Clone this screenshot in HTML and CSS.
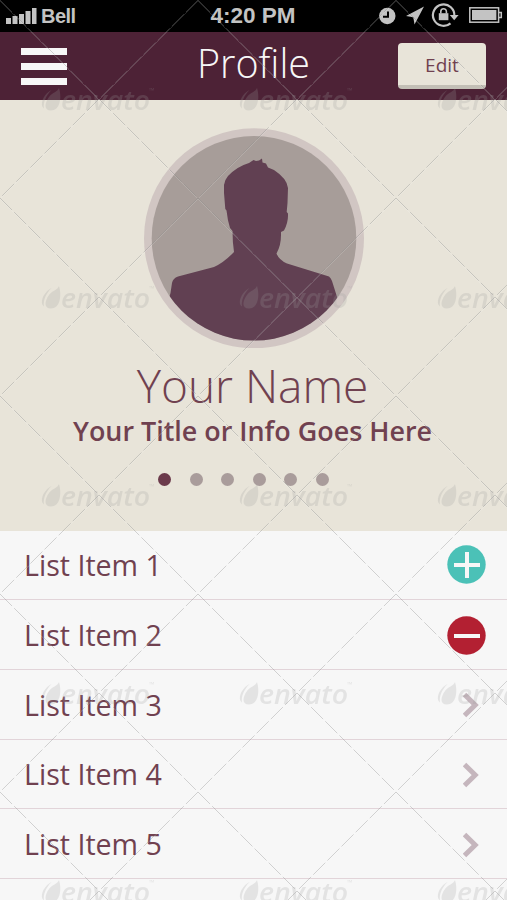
FILE: index.html
```html
<!DOCTYPE html>
<html lang="en">
<head>
<meta charset="utf-8">
<title>Profile</title>
<link rel="stylesheet" href="styles.css">
</head>
<body>
<div class="screen">
  <div class="status">
    <div class="carrier">
      <svg width="31" height="17" viewBox="0 0 31 17" fill="#c3c3c3"><path d="M0 11h5v6H0zM6.500 9h5v8h-5zM13 7h5v10h-5zM19.500 4h5v13h-5zM26 1h4.500v16H26z"/></svg>
      <span>Bell</span>
    </div>
    <div class="clock">4:20 PM</div>
    <svg class="indicators" width="125" height="28" viewBox="378 2 125 28" fill="#c3c3c3">
      <circle cx="387.300" cy="16" r="8.200"/>
      <path d="M388 11.500v5.300h-5" fill="none" stroke="#000" stroke-width="2"/>
      <path d="M424 6.500 414.500 24.500 413.300 17.200 406 16z"/>
      <path d="M450.500 23.300A10.700 10.700 0 1 1 454.300 16" fill="none" stroke="#c3c3c3" stroke-width="2.200"/>
      <path d="M449.800 15h8.800l-4.400 5.200z"/>
      <rect x="438.800" y="13.200" width="9.600" height="7"/>
      <path d="M440.800 13.500v-2a2.800 2.800 0 0 1 5.600 0v2" fill="none" stroke="#c3c3c3" stroke-width="1.600"/>
      <rect x="469.800" y="7.800" width="28.800" height="14.400" fill="none" stroke="#c3c3c3" stroke-width="1.500"/>
      <rect x="472" y="10" width="24.400" height="10"/>
      <path d="M499 12.500h2.300v5H499" fill="none" stroke="#c3c3c3" stroke-width="1.500"/>
    </svg>
  </div>
  <header class="bar">
    <div class="menu"><i></i><i></i><i></i></div>
    <h1 class="title">Profile</h1>
    <button class="edit">Edit</button>
  </header>
  <section class="hero">
    <svg class="avatar" width="220" height="220" viewBox="143 128 220 220">
      <defs><clipPath id="disc"><circle cx="253" cy="238.300" r="102.300"/></clipPath></defs>
      <circle cx="253" cy="238.300" r="110" fill="#d1c6c3"/>
      <circle cx="253" cy="238.300" r="102.300" fill="#a79d99"/>
      <path clip-path="url(#disc)" fill="#614052" d="M165 310 169.500 293 171 283Q172 278 177 276.500L213 267Q223 262.500 233 252 231.500 242 231.500 231L229 228Q226.500 220 225.500 210.500L224.300 209 223 193V185Q223.500 180 227 176 236 166.500 248 163L252.500 160 255 161 258 160.500 261 158.500 261.500 162.500 265 163.500 267 167.500 273 170Q286 178.500 287 188L286.500 203 285.700 212 287 213.500Q287.500 222 283 230.500L280 232Q280.500 245 275.500 253.500 278 260 286 263.500L328 276.500Q330 278 331 281L337 300 340 350H165z"/>
    </svg>
    <h2 class="name">Your Name</h2>
    <p class="info">Your Title or Info Goes Here</p>
    <div class="dots"><i class="on"></i><i></i><i></i><i></i><i></i><i></i></div>
  </section>
  <ul class="list">
    <li><span>List Item 1</span><svg class="badge add" width="39" height="39" viewBox="0 0 39 39"><circle cx="19.500" cy="19.500" r="19.200" fill="#4bc1b7"/><path d="M7 20h26M20 7v26" stroke="#f7f7f7" stroke-width="4"/></svg></li>
    <li><span>List Item 2</span><svg class="badge" width="39" height="39" viewBox="0 0 39 39"><circle cx="19.500" cy="19.500" r="19.200" fill="#b32032"/><path d="M7 20h26" stroke="#f7f7f7" stroke-width="4"/></svg></li>
    <li><span>List Item 3</span><svg class="chevron" width="16" height="26" viewBox="0 0 16 26"><path d="M1.500 2.500 12.200 13 1.500 23.500" fill="none" stroke="#c5b6bd" stroke-width="5"/></svg></li>
    <li><span>List Item 4</span><svg class="chevron" width="16" height="26" viewBox="0 0 16 26"><path d="M1.500 2.500 12.200 13 1.500 23.500" fill="none" stroke="#c5b6bd" stroke-width="5"/></svg></li>
    <li><span>List Item 5</span><svg class="chevron" width="16" height="26" viewBox="0 0 16 26"><path d="M1.500 2.500 12.200 13 1.500 23.500" fill="none" stroke="#c5b6bd" stroke-width="5"/></svg></li>
    <li></li>
  </ul>
  <svg class="watermark" width="507" height="900">
    <defs>
      <pattern id="tile" width="198" height="198" patternUnits="userSpaceOnUse">
        <path d="M0 1 198 199M198 1 0 199" stroke="#fff" stroke-opacity=".25" stroke-width=".6"/>
        <path d="M0 0 198 198M198 0 0 198" stroke="#888" stroke-opacity=".6" stroke-width=".6" stroke-dasharray="17 3"/>
        <g fill="#999" fill-opacity=".22">
          <path d="M59 88C62 98 60 110.500 51 110.500 43.500 110.500 44.500 103 49 97 53 92 57.500 92 59 88zM51.500 90C45 93 40 102 42.500 107L44 108.500C43 103 45.500 96 51.500 90z"/>
          <text class="mark" x="61" y="110" textLength="89" lengthAdjust="spacingAndGlyphs">envato</text>
          <text class="tm" x="149" y="93">™</text>
        </g>
      </pattern>
    </defs>
    <rect width="507" height="900" fill="url(#tile)"/>
  </svg>
</div>
</body>
</html>
```
FILE: styles.css
```css
* { box-sizing: border-box; }
body { margin: 0; font-family: "Open Sans", sans-serif; color: #704150; }
h1, h2, p, ul { margin: 0; padding: 0; font-weight: 300; }
.screen { position: relative; width: 507px; height: 900px; overflow: hidden; background: #f7f7f7; }
.status {
  display: grid; grid-template-columns: 1fr auto 1fr; align-items: center;
  height: 32px; padding: 0 4px 0 6px; background: #000; color: #c3c3c3;
  font: bold 20px/32px "Liberation Sans", sans-serif;
}
.carrier { display: flex; align-items: center; gap: 4px; letter-spacing: -0.5px; }
.carrier svg { margin-top: -2px; }
.carrier span { margin-top: -1px; }
.clock { font-size: 22.500px; letter-spacing: 0; margin: -1px 3px 0 0; }
.indicators { justify-self: end; }
.bar {
  display: grid; grid-template-columns: 1fr auto 1fr; align-items: center;
  height: 68px; padding: 0 21px; background: #4d2236;
}
.menu { display: grid; gap: 8px; width: 46px; }
.menu i { height: 7px; background: #f7f7f7; }
.title { font-size: 39.500px; line-height: 60px; color: #f7f7f7; margin-top: -6px; }
.edit {
  justify-self: end; width: 88px; height: 46px; padding: 2px 0 0; border: 0;
  border-bottom: 4px solid #c3bfb6; border-radius: 4px; background: #e8e4d9;
  font: 19px "Open Sans", sans-serif; color: #704150;
}
.hero {
  display: flex; flex-direction: column; align-items: center;
  height: 430.500px; padding-top: 28px; background: #e8e4d9;
}
.name { font-size: 46px; line-height: 60px; margin: 7px 2px 0 0; }
.info { font-size: 26.900px; line-height: 36px; font-weight: 600; margin: -2px 2px 0 0; }
.dots { display: flex; gap: 18.6px; margin: 24px 20px 0 0; }
.dots i { width: 13px; height: 13px; border-radius: 50%; background: #a99c9b; }
.dots .on { background: #6b3a4b; }
.list { display: grid; grid-template-rows: 69.500px 70px 69.500px 69.500px 70px 70px; list-style: none; }
.list li {
  display: flex; align-items: center; justify-content: space-between;
  padding: 0 21px 0 24px; border-bottom: 1px solid #e2d4d9; font-size: 28.600px; font-weight: 400;
}
.badge { margin-top: 1px; }
.add { margin-top: -1px; }
.chevron { margin: 2px 7px 0 0; }
.watermark { position: absolute; inset: 0; pointer-events: none; }
.mark { font: italic 600 27px "Open Sans", sans-serif; }
.tm { font: 7px "Open Sans", sans-serif; }
```
